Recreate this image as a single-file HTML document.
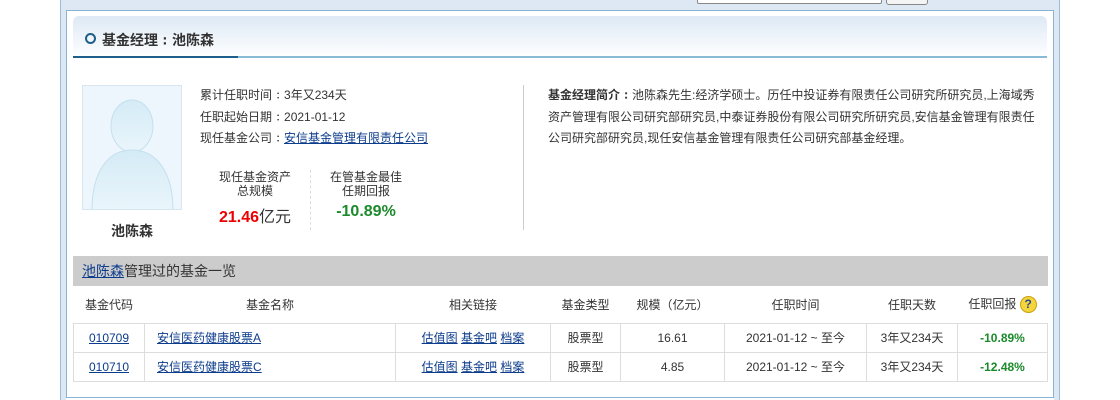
<!DOCTYPE html>
<html><head><meta charset="utf-8"><style>
*{margin:0;padding:0;box-sizing:border-box}
body{width:1120px;height:400px;overflow:hidden;background:#fff;font-family:"Liberation Sans","Noto Sans CJK SC",sans-serif;font-size:12px;color:#333;position:relative}
a{color:#0c3c8c;text-decoration:underline}
.c{font-family:"WenQuanYi Zen Hei","IPAGothic",sans-serif}
.abs{position:absolute}
.outer{left:60px;top:0;width:1000px;height:400px;background:#dde8f4;border-left:1px solid #9bbcd8;border-right:1px solid #9bbcd8}
.inner{left:66px;top:10px;width:988px;height:388px;background:#fff;border:1px solid #8ab4d4}
.line2{left:66px;top:397px;width:988px;height:3px;border-top:1px solid #8ab4d4;background:#fff}
.hdr{left:73px;top:16px;width:974px;height:42px;border-radius:6px 6px 0 0;background:linear-gradient(#dde9f5,#fff);}
.hline{left:73px;top:56px;width:974px;height:2px;background:#8abbd6}
.hline2{left:73px;top:56px;width:165px;height:2px;background:#1d5f8a}
.circ{left:85px;top:33px;width:11px;height:11px;border:2px solid #1d5f8a;border-radius:50%}
.title{left:102px;top:30px;font-size:14px;font-weight:bold;color:#333}
.photo{left:82px;top:85px;width:100px;height:125px;background:#eef6fd;border:1px solid #d6e6f2;overflow:hidden}
.info div{height:21.5px}
table{border-collapse:collapse;position:absolute;left:73px;top:286px;width:975px}
td{height:29px;text-align:center;border:1px solid #ddd;font-size:12px}
tr.h td{height:37px;border:none;border-bottom:1px solid #ddd;color:#333}
.g{color:#1a8a2a;font-weight:bold}
</style></head><body>
<div class="abs outer"></div>
<div class="abs" style="left:697px;top:-2px;width:185px;height:6px;border:1px solid #888;background:#fff;border-radius:2px"></div>
<div class="abs" style="left:886px;top:-2px;width:42px;height:7px;border:1px solid #888;background:#f4f4f4;border-radius:3px"></div>
<div class="abs inner"></div>
<div class="abs line2"></div>
<div class="abs hdr"></div>
<div class="abs hline"></div><div class="abs hline2"></div>
<div class="abs circ"></div>
<div class="abs title">基金经理<span class="c">：</span>池陈森</div>
<div class="abs photo"><svg width="100" height="125"><defs><linearGradient id="a" x1="0" y1="0" x2="0" y2="1"><stop offset="0" stop-color="#d4ebf6"/><stop offset="1" stop-color="#eaf5fb"/></linearGradient></defs><ellipse cx="49" cy="40" rx="21" ry="26" fill="url(#a)" stroke="#c4dfee"/><path d="M9 125 C9 85 25 64 49 64 C73 64 90 85 90 125 Z" fill="url(#a)" stroke="#c4dfee"/></svg></div>
<div class="abs" style="left:111px;top:221px;font-size:14px;font-weight:bold">池陈森</div>
<div class="abs info" style="left:200px;top:88px;line-height:14px">
<div>累计任职时间<span class="c">：</span>3年又234天</div><div>任职起始日期<span class="c">：</span>2021-01-12</div><div>现任基金公司<span class="c">：</span><a>安信基金管理有限责任公司</a></div></div>
<div class="abs" style="left:210px;top:170px;width:90px;text-align:center;line-height:14px">现任基金资产<br>总规模</div>
<div class="abs" style="left:200px;top:203px;width:110px;text-align:center;font-size:16px"><b style="color:#e00">21.46</b>亿元</div>
<div class="abs" style="left:310px;top:170px;height:60px;border-left:1px dashed #ddd"></div>
<div class="abs" style="left:321px;top:170px;width:90px;text-align:center;line-height:14px">在管基金最佳<br>任期回报</div>
<div class="abs" style="left:311px;top:203px;width:110px;text-align:center;font-size:16px;color:#1a8a2a;font-weight:bold">-10.89%</div>
<div class="abs" style="left:523px;top:85px;height:145px;border-left:1px solid #ccc"></div>
<div class="abs" style="left:548px;top:85px;width:490px;line-height:21.5px"><b>基金经理简介<span class="c">：</span></b>池陈森先生:经济学硕士。历任中投证券有限责任公司研究所研究员,上海域秀资产管理有限公司研究部研究员,中泰证券股份有限公司研究所研究员,安信基金管理有限责任公司研究部研究员,现任安信基金管理有限责任公司研究部基金经理。</div>
<div class="abs" style="left:73px;top:256px;width:975px;height:30px;background:#ccc;font-size:14px;line-height:30px;padding-left:9px"><a>池陈森</a>管理过的基金一览</div>
<table>
<tr class="h"><td style="width:71px">基金代码</td><td style="width:251px">基金名称</td><td style="width:155px">相关链接</td><td style="width:70px">基金类型</td><td style="width:104px">规模（亿元）</td><td style="width:142px">任职时间</td><td style="width:91px">任职天数</td><td>任职回报 <span style="display:inline-block;width:17px;height:17px;border-radius:50%;background:#f5d53a;border:1px solid #c9a010;color:#2a4a9a;font-size:12px;line-height:15px;font-weight:bold;vertical-align:middle">?</span></td></tr>
<tr><td><a>010709</a></td><td style="text-align:left;padding-left:12px"><a>安信医药健康股票A</a></td><td><a>估值图</a> <a>基金吧</a> <a>档案</a></td><td>股票型</td><td>16.61</td><td>2021-01-12 ~ 至今</td><td>3年又234天</td><td class="g">-10.89%</td></tr>
<tr><td><a>010710</a></td><td style="text-align:left;padding-left:12px"><a>安信医药健康股票C</a></td><td><a>估值图</a> <a>基金吧</a> <a>档案</a></td><td>股票型</td><td>4.85</td><td>2021-01-12 ~ 至今</td><td>3年又234天</td><td class="g">-12.48%</td></tr>
</table>
</body></html>
